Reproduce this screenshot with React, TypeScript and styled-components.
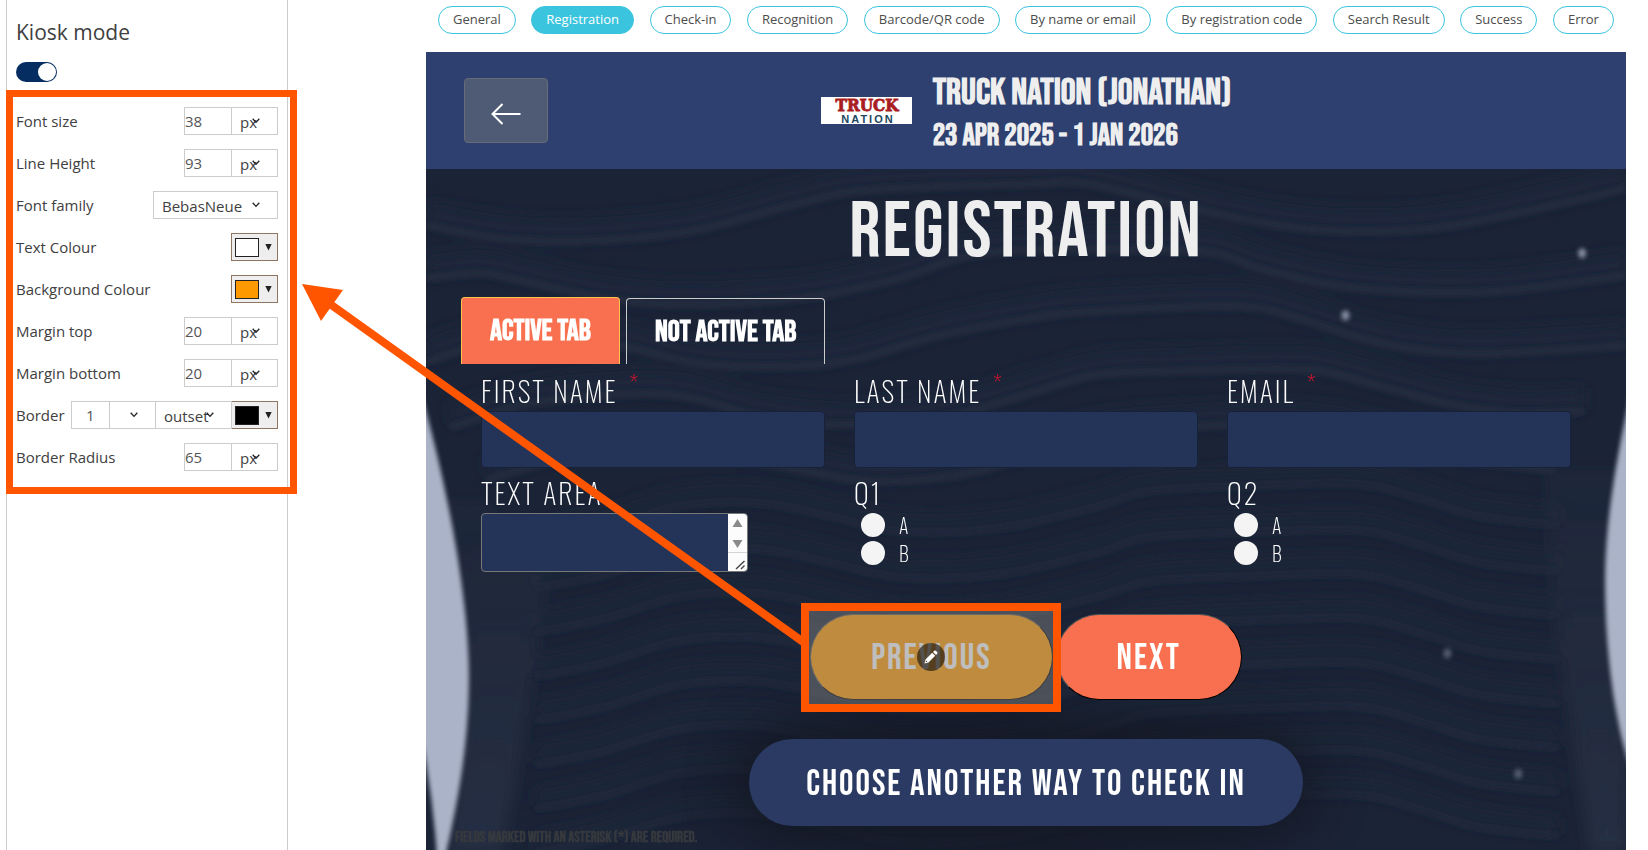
import React from 'react';
import styled, { createGlobalStyle } from 'styled-components';

const display = '"Bebas Neue", Oswald, "Roboto Condensed", Roboto, sans-serif';
const thin = 'Oswald, "Roboto Condensed", Roboto, sans-serif';
const ui = '"Open Sans", "Noto Sans", sans-serif';
const accent = '#ff5500';

const GlobalStyle = createGlobalStyle`
  *, *::before, *::after { box-sizing: border-box; }
  body { margin: 0; background: #fff; color: #404040; font-family: ${ui}; }
  button, input, select, textarea { font: inherit; color: inherit; margin: 0; }
`;

const Page = styled.div`
  position: relative;
  display: flex;
  min-height: 100vh;
`;

/* ---------- settings sidebar ---------- */

const Sidebar = styled.aside`
  flex: none;
  width: 282px;
  margin-left: 6px;
  padding: 16px 9px;
  border: 1px solid #ccc;
  border-width: 0 1px;
`;

const SidebarTitle = styled.h1`
  margin: 0 0 14px;
  font-size: 21px;
  line-height: 32px;
  font-weight: 400;
`;

const Toggle = styled.input`
  appearance: none;
  display: block;
  position: relative;
  width: 41px;
  height: 20px;
  border-radius: 10px;
  background: #052d61;
  &::after {
    content: '';
    position: absolute;
    top: 1px;
    right: 1px;
    width: 18px;
    height: 18px;
    border-radius: 50%;
    background: #fff;
  }
`;

const Settings = styled.section`
  position: relative;
  display: flex;
  flex-direction: column;
  gap: 14px;
  margin-top: 25px;
`;

const Frame = styled.div<{ $t: number; $r: number; $b: number; $l: number; $w: number }>`
  position: absolute;
  z-index: 3;
  top: ${p => -p.$t}px;
  right: ${p => -p.$r}px;
  bottom: ${p => -p.$b}px;
  left: ${p => -p.$l}px;
  border: ${p => p.$w}px solid ${accent};
  pointer-events: none;
`;

const Row = styled.div`
  display: flex;
  align-items: center;
  height: 28px;
  font-size: 15px;
`;

const RowLabel = styled.label`
  flex: 1;
  white-space: nowrap;
`;

const NumberBox = styled.input<{ $narrow?: boolean }>`
  width: ${p => (p.$narrow ? 39 : 48)}px;
  height: 28px;
  padding: 0 ${p => (p.$narrow ? 14 : 0)}px;
  border: 1px solid #ccc;
  border-radius: 0;
  background: #fff;
  color: #555;
`;

const SelectWrap = styled.span<{ $w: number }>`
  position: relative;
  display: block;
  width: ${p => p.$w}px;
  height: 28px;
  margin-left: -1px;
  svg {
    position: absolute;
    right: 18px;
    top: 11px;
    pointer-events: none;
  }
`;

const SelectBox = styled.select`
  appearance: none;
  display: block;
  width: 100%;
  height: 28px;
  padding: 2px 0 0 8px;
  border: 1px solid #ccc;
  border-radius: 0;
  background: #fff;
  color: #404040;
`;

const ColourButton = styled.button`
  display: flex;
  align-items: center;
  gap: 6px;
  width: 47px;
  height: 28px;
  margin-left: -1px;
  padding: 0 3px;
  border: 1px solid #8f7660;
  border-radius: 0;
  background: #eee;
`;

const Swatch = styled.span<{ $c: string }>`
  width: 24px;
  height: 19px;
  border: 1px solid #222;
  background: ${p => p.$c};
`;

/* ---------- preview ---------- */

const Preview = styled.main`
  flex: 1;
  min-width: 0;
  margin: 0 22px 0 138px;
  display: flex;
  flex-direction: column;
`;

const Screens = styled.nav`
  display: flex;
  justify-content: space-between;
  padding: 6px 12px 18px;
`;

const ScreenPill = styled.button<{ $on?: boolean }>`
  height: 28px;
  padding: 0 14px 2px;
  border: 1px solid #3bc4de;
  border-radius: 14px;
  background: ${p => (p.$on ? '#3bc4de' : '#fff')};
  color: ${p => (p.$on ? '#fff' : '#4d4d4d')};
  font-size: 13px;
  line-height: 20px;
  white-space: nowrap;
`;

const Banner = styled.header`
  position: relative;
  display: flex;
  align-items: center;
  justify-content: center;
  gap: 21px;
  height: 117px;
  background: #2d406f;
  color: #eee;
`;

const BackButton = styled.button`
  position: absolute;
  left: 38px;
  top: 26px;
  width: 84px;
  height: 65px;
  padding: 6px 0 0;
  display: flex;
  align-items: center;
  justify-content: center;
  border: 1px solid #656c78;
  border-radius: 4px;
  background: #4f5b74;
`;

const Logo = styled.svg`
  overflow: visible;
`;

const EventText = styled.div`
  padding-top: 4px;
  font-family: ${display};
  font-weight: 700;
`;

const EventName = styled.div`
  font-size: 37px;
  line-height: 46px;
`;

const EventDates = styled.div`
  font-size: 31px;
  line-height: 40px;
`;

const Stage = styled.section`
  position: relative;
  flex: 1;
  padding: 20px 35px 4px;
  background: #1b2336;
  color: #fff;
  overflow: hidden;
`;

const Backdrop = styled.svg`
  position: absolute;
  top: 0;
  left: 0;
  width: 100%;
  height: 100%;
`;

const Content = styled.div`
  position: relative;
`;

const StageTitle = styled.h2`
  margin: 0;
  font-family: ${display};
  font-size: 78px;
  line-height: 88px;
  font-weight: 400;
  letter-spacing: 2px;
  text-align: center;
  color: #eee;
`;

const Tabs = styled.div`
  display: flex;
  align-items: flex-end;
  gap: 6px;
  margin-top: 20px;
`;

const Tab = styled.button<{ $on?: boolean }>`
  height: ${p => (p.$on ? 67 : 66)}px;
  padding: 0 28px;
  border: 1px solid ${p => (p.$on ? '#ffc04d' : '#ccc')};
  border-bottom: 0;
  border-radius: 4px 4px 0 0;
  background: ${p => (p.$on ? '#f8704f' : 'transparent')};
  color: #fff;
  font-family: ${display};
  font-size: 30px;
  line-height: 36px;
  font-weight: 700;
`;

const Fields = styled.div`
  display: grid;
  grid-template-columns: repeat(3, 1fr);
  column-gap: 29px;
  row-gap: 5px;
  padding: 7px 20px 0;
`;

const FieldLabel = styled.label`
  display: block;
  height: 40px;
  font-family: ${thin};
  font-size: 28px;
  line-height: 40px;
  font-weight: 200;
  letter-spacing: 2px;
  text-transform: uppercase;
`;

const Asterisk = styled.sup`
  margin-left: 12px;
  color: #d0142c;
  font-size: 24px;
  line-height: 20px;
`;

const TextInput = styled.input`
  display: block;
  width: 100%;
  height: 57px;
  border: 1px solid #18213a;
  border-radius: 4px;
  background: #243459;
`;

const AreaBox = styled.div`
  display: flex;
  width: 267px;
  height: 59px;
  border: 1px solid #777;
  border-radius: 4px;
  background: #243459;
  overflow: hidden;
`;

const Area = styled.textarea`
  flex: 1;
  min-width: 0;
  border: 0;
  background: transparent;
  resize: none;
  overflow: hidden;
`;

const Choices = styled.div`
  display: flex;
  flex-direction: column;
  gap: 4px;
  margin-left: 7px;
`;

const Choice = styled.label`
  display: flex;
  align-items: center;
  gap: 14px;
  height: 24px;
  font-family: ${thin};
  font-size: 20px;
  line-height: 24px;
  font-weight: 200;
`;

const Radio = styled.input`
  appearance: none;
  width: 24px;
  height: 24px;
  border-radius: 50%;
  background: #f4f4f4;
`;

const Actions = styled.div`
  display: flex;
  justify-content: center;
  gap: 3px;
  margin-top: 42px;
`;

const Editable = styled.div`
  position: relative;
`;

const Veil = styled.div`
  position: absolute;
  inset: -3px 0 -4px -1px;
  background: rgba(126, 126, 126, 0.5);
  pointer-events: none;
`;

const EditBadge = styled.button`
  position: absolute;
  left: calc(50% - 14px);
  top: calc(50% - 14px);
  width: 28px;
  height: 28px;
  padding: 0;
  display: flex;
  align-items: center;
  justify-content: center;
  border: 0;
  border-radius: 50%;
  background: rgba(20, 15, 10, 0.62);
`;

const ActionButton = styled.button<{ $bg: string }>`
  display: block;
  height: 86px;
  padding: 4px 60px 0;
  border: 1px outset #000;
  border-radius: 65px;
  background: ${p => p.$bg};
  color: #fff;
  font-family: ${display};
  font-size: 36px;
  line-height: 44px;
  letter-spacing: 2px;
`;

const AnotherWay = styled.button`
  display: block;
  height: 87px;
  margin: 39px auto 0;
  padding: 4px 57px 0;
  border: 0;
  border-radius: 44px;
  background: #2a3a62;
  box-shadow: 0 0 50px 10px rgba(18, 22, 32, 0.7);
  color: #fff;
  font-family: ${display};
  font-size: 36px;
  line-height: 44px;
  letter-spacing: 2px;
  white-space: nowrap;
`;

const Note = styled.p`
  margin: 2px 0 0 -6px;
  font-family: ${display};
  font-size: 15px;
  font-weight: 700;
  line-height: 20px;
  color: #35383c;
`;

const Pointer = styled.svg`
  position: absolute;
  z-index: 4;
  left: 302px;
  top: 284px;
  pointer-events: none;
`;

/* ---------- pieces ---------- */

const Chevron = () => (
  <svg width="8" height="6" viewBox="0 0 8 6" aria-hidden="true">
    <path d="M0.7 0.8 L4 4.4 L7.3 0.8" fill="none" stroke="#222" strokeWidth="1.3" />
  </svg>
);

function Select({ id, value, w, label }: { id: string; value: string; w: number; label: string }) {
  return (
    <SelectWrap $w={w}>
      <SelectBox id={id} aria-label={label} defaultValue={value}>
        <option>{value}</option>
      </SelectBox>
      <Chevron />
    </SelectWrap>
  );
}

function SizeRow({ id, label, value }: { id: string; label: string; value: string }) {
  return (
    <Row>
      <RowLabel htmlFor={id}>{label}</RowLabel>
      <NumberBox id={id} defaultValue={value} />
      <Select id={id + '-unit'} label={label + ' unit'} value="px" w={47} />
    </Row>
  );
}

function Colour({ id, colour, label }: { id: string; colour: string; label: string }) {
  return (
    <ColourButton id={id} type="button" aria-label={label}>
      <Swatch $c={colour} />
      <svg width="7" height="8" viewBox="0 0 7 8" aria-hidden="true">
        <path d="M0.300 1 H6.700 L3.500 7.500 Z" fill="#222" />
      </svg>
    </ColourButton>
  );
}

type Pt = [number, number];

/* Smooth line through the given points (Catmull-Rom turned into cubic segments). */
function curve(pts: Pt[], dy = 0) {
  let d = `M${pts[0][0]} ${pts[0][1] + dy}`;
  for (let i = 0; i < pts.length - 1; i++) {
    const a = pts[Math.max(i - 1, 0)];
    const b = pts[i];
    const c = pts[i + 1];
    const e = pts[Math.min(i + 2, pts.length - 1)];
    d += ` C${b[0] + (c[0] - a[0]) / 6} ${b[1] + dy + (c[1] - a[1]) / 6} ${c[0] - (e[0] - b[0]) / 6} ${c[1] + dy - (e[1] - b[1]) / 6} ${c[0]} ${c[1] + dy}`;
  }
  return d;
}

const upperWaves: Pt[][] = [
  [[0, 56], [74, 69], [154, 72], [264, 62], [374, 34], [444, 21], [604, 15], [664, 15], [774, 41], [854, 56], [924, 62], [1024, 57], [1174, 26], [1202, 18]],
  [[0, 109], [54, 104], [94, 111], [174, 128], [254, 135], [374, 129], [474, 109], [534, 89], [604, 81], [774, 82], [834, 99], [904, 115], [974, 122], [1074, 122], [1202, 106]],
  [[0, 193], [44, 178], [110, 165], [194, 176], [274, 194], [354, 197], [424, 191], [514, 166], [604, 149], [664, 142], [814, 137], [874, 149], [924, 165], [974, 177], [1054, 184], [1202, 176]],
  [[24, 258], [94, 236], [174, 226], [254, 226], [334, 246], [424, 255], [524, 246], [604, 224], [674, 205], [774, 201], [884, 200], [954, 216], [1024, 234], [1094, 243], [1160, 241]],
  [[60, 310], [154, 285], [254, 280], [354, 296], [444, 311], [534, 305], [604, 286], [674, 265], [784, 256], [890, 256], [970, 272], [1040, 290], [1130, 300]],
];
const lowerWave: Pt[] = [[110, 372], [180, 358], [254, 336], [334, 333], [404, 346], [474, 361], [574, 358], [674, 336], [724, 321], [824, 316], [934, 314], [994, 328], [1054, 346], [1134, 355]];
const stars: Pt[] = [[1158, 84], [921, 146], [1023, 483], [1094, 603]];

function Waves() {
  return (
    <Backdrop viewBox="0 0 1202 681" preserveAspectRatio="none" aria-hidden="true">
      <defs>
        <filter id="haze" x="-5%" y="-5%" width="110%" height="110%"><feGaussianBlur stdDeviation="7" /></filter>
        <filter id="soft" x="-5%" y="-5%" width="110%" height="110%"><feGaussianBlur stdDeviation="2.5" /></filter>
        <filter id="edge" x="-20%" y="-5%" width="140%" height="110%"><feGaussianBlur stdDeviation="2" /></filter>
        <radialGradient id="shade"><stop offset="0" stopColor="#131722" stopOpacity="0.8" /><stop offset="1" stopColor="#131722" stopOpacity="0" /></radialGradient>
        <linearGradient id="band" x1="0" y1="0" x2="0" y2="1"><stop offset="0" stopColor="#273044" stopOpacity="0.2" /><stop offset="1" stopColor="#273044" stopOpacity="0.9" /></linearGradient>
      </defs>
      <g filter="url(#haze)" fill="none">
        {upperWaves.map((w, i) => <path key={i} d={curve(w, -12)} stroke="#1f283a" strokeWidth="22" />)}
        {[0, 46, 90, 134, 178, 222, 266, 310].map(dy => <path key={dy} d={curve(lowerWave, dy - 10)} stroke="#1f2739" strokeWidth="16" />)}
        <path d="M60 330 L120 410 Q100 560 76 681 H20 Q50 520 20 330 Z" fill="url(#band)" />
        <path d="M1120 300 L1130 440 Q1150 580 1166 681 H1202 V300 Z" fill="url(#band)" />
      </g>
      <g filter="url(#soft)" fill="none">
        {upperWaves.map((w, i) => <path key={i} d={curve(w)} stroke="#262f41" strokeWidth="5" />)}
        {[0, 46, 90, 134, 178, 222, 266, 310].map(dy => <path key={dy} d={curve(lowerWave, dy)} stroke="#242c3e" strokeWidth="4" />)}
      </g>
      <ellipse cx="560" cy="620" rx="380" ry="110" fill="url(#shade)" />
      <g filter="url(#edge)" fill="#abb3c8">
        <path d="M-10 205 C10 275 42 400 43 505 C43 580 30 640 16 700 L12 700 Q8 630 -6 560 Z" />
        <path d="M1214 190 C1198 260 1181 340 1181 410 C1181 480 1190 560 1214 620 Z" />
        {stars.map(([x, y], i) => <ellipse key={x} cx={x} cy={y} rx="4" ry="5" opacity={i < 2 ? 0.75 : 0.4} />)}
      </g>
    </Backdrop>
  );
}

const screens = ['General', 'Registration', 'Check-in', 'Recognition', 'Barcode/QR code', 'By name or email', 'By registration code', 'Search Result', 'Success', 'Error'];

function RequiredField({ id, label }: { id: string; label: string }) {
  return (
    <div>
      <FieldLabel htmlFor={id}>{label}<Asterisk>*</Asterisk></FieldLabel>
      <TextInput id={id} />
    </div>
  );
}

function Question({ id }: { id: string }) {
  return (
    <div role="radiogroup" aria-labelledby={id}>
      <FieldLabel as="div" id={id}>{id}</FieldLabel>
      <Choices>
        <Choice><Radio type="radio" name={id} />A</Choice>
        <Choice><Radio type="radio" name={id} />B</Choice>
      </Choices>
    </div>
  );
}

export default function App() {
  return (
    <Page>
      <GlobalStyle />
      <Sidebar>
        <SidebarTitle>Kiosk mode</SidebarTitle>
        <Toggle type="checkbox" role="switch" defaultChecked aria-label="Kiosk mode" />
        <Settings>
          <SizeRow id="font-size" label="Font size" value="38" />
          <SizeRow id="line-height" label="Line Height" value="93" />
          <Row>
            <RowLabel htmlFor="font-family">Font family</RowLabel>
            <Select id="font-family" label="Font family" value="BebasNeue" w={125} />
          </Row>
          <Row>
            <RowLabel htmlFor="text-colour">Text Colour</RowLabel>
            <Colour id="text-colour" label="Text Colour" colour="#fff" />
          </Row>
          <Row>
            <RowLabel htmlFor="background-colour">Background Colour</RowLabel>
            <Colour id="background-colour" label="Background Colour" colour="#ff9900" />
          </Row>
          <SizeRow id="margin-top" label="Margin top" value="20" />
          <SizeRow id="margin-bottom" label="Margin bottom" value="20" />
          <Row>
            <RowLabel htmlFor="border">Border</RowLabel>
            <NumberBox id="border" defaultValue="1" $narrow />
            <Select id="border-unit" label="Border unit" value="" w={47} />
            <Select id="border-style" label="Border style" value="outset" w={77} />
            <Colour id="border-colour" label="Border colour" colour="#000" />
          </Row>
          <SizeRow id="border-radius" label="Border Radius" value="65" />
          <Frame $t={17} $r={19} $b={23} $l={10} $w={7} />
        </Settings>
      </Sidebar>

      <Preview>
        <Screens>
          {screens.map(s => <ScreenPill key={s} type="button" $on={s === 'Registration'}>{s}</ScreenPill>)}
        </Screens>
        <Banner>
          <BackButton type="button" aria-label="Back">
            <svg width="30" height="22" viewBox="0 0 30 22" aria-hidden="true">
              <path d="M29.500 11 H1.500 M11.500 1 L1.500 11 L11.500 21" fill="none" stroke="#fff" strokeWidth="2" />
            </svg>
          </BackButton>
          <Logo width="91" height="27" viewBox="0 0 91 27" role="img" aria-label="Truck Nation">
            <rect width="91" height="27" fill="#fff" />
            <text x="46" y="14" textAnchor="middle" fontFamily='"DejaVu Serif Condensed", "DejaVu Serif", serif' fontWeight="700" fontSize="17" fill="#a91c22" stroke="#a91c22" strokeWidth="0.8">TRUCK</text>
            <text x="47" y="26" textAnchor="middle" fontFamily='"Liberation Sans", sans-serif' fontWeight="700" fontSize="11" letterSpacing="2" fill="#21465f">NATION</text>
          </Logo>
          <EventText>
            <EventName>TRUCK NATION (JONATHAN)</EventName>
            <EventDates>23 APR 2025 - 1 JAN 2026</EventDates>
          </EventText>
        </Banner>
        <Stage>
          <Waves />
          <Content>
            <StageTitle>REGISTRATION</StageTitle>
            <Tabs role="tablist">
              <Tab type="button" role="tab" aria-selected="true" $on>ACTIVE TAB</Tab>
              <Tab type="button" role="tab" aria-selected="false">NOT ACTIVE TAB</Tab>
            </Tabs>
            <Fields>
              <RequiredField id="first-name" label="First name" />
              <RequiredField id="last-name" label="Last name" />
              <RequiredField id="email" label="Email" />
              <div>
                <FieldLabel htmlFor="text-area">Text area</FieldLabel>
                <AreaBox>
                  <Area id="text-area" />
                  <svg width="19" height="57" viewBox="0 0 19 57" aria-hidden="true">
                    <rect width="19" height="57" fill="#fcfcfc" />
                    <path d="M0 38.500 H19" stroke="#d5d5d5" />
                    <path d="M4.500 13 L9.500 5 L14.500 13 Z M4.500 26 L9.500 34 L14.500 26 Z" fill="#8a8a8a" />
                    <path d="M8 55 L16.500 47 M13 55 L16.500 51.500" stroke="#444" strokeWidth="1.400" />
                  </svg>
                </AreaBox>
              </div>
              <Question id="Q1" />
              <Question id="Q2" />
            </Fields>
            <Actions>
              <Editable>
                <ActionButton type="button" $bg="#ff9900">PREVIOUS</ActionButton>
                <Veil />
                <EditBadge type="button" aria-label="Edit button">
                  <svg width="14" height="14" viewBox="0 0 14 14" aria-hidden="true">
                    <path d="M0.500 13.500 L1.500 9.500 L8.200 2.800 L11.200 5.800 L4.500 12.500 Z M9 2 L10.500 0.600 Q11.200 0.200 11.800 0.700 L13.300 2.200 Q13.800 2.800 13.400 3.500 L12 5 Z" fill="#fff" />
                    <path d="M1.700 12.300 L2.200 10.600 L3.400 11.800 Z" fill="#4a3920" />
                  </svg>
                </EditBadge>
                <Frame $t={11} $r={8} $b={12} $l={9} $w={8} />
              </Editable>
              <ActionButton type="button" $bg="#f8704f">NEXT</ActionButton>
            </Actions>
            <AnotherWay type="button">CHOOSE ANOTHER WAY TO CHECK IN</AnotherWay>
            <Note>FIELDS MARKED WITH AN ASTERISK (*) ARE REQUIRED.</Note>
          </Content>
        </Stage>
      </Preview>

      <Pointer width="504" height="362" viewBox="0 0 504 362" aria-hidden="true">
        <path d="M0 0 L41 6 L19 37 Z" fill={accent} />
        <path d="M28 20 L504 360" stroke={accent} strokeWidth="8" />
      </Pointer>
    </Page>
  );
}
